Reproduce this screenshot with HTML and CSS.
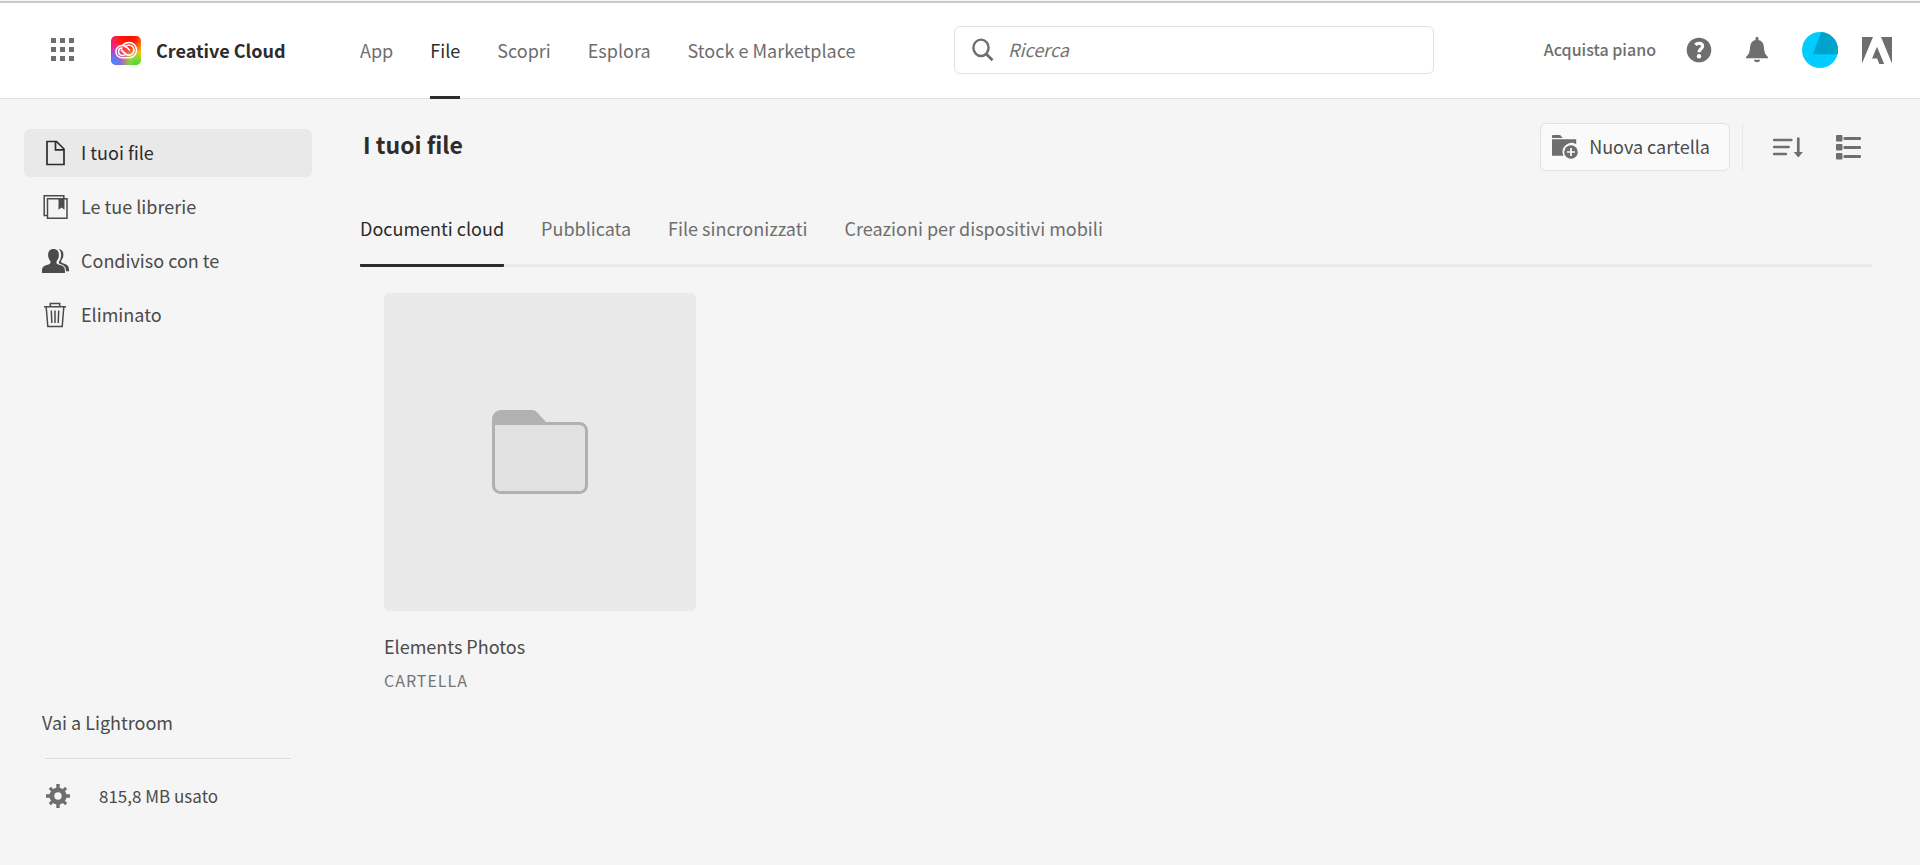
FILE: index.html
```html
<!DOCTYPE html>
<html lang="it">
<head>
<meta charset="utf-8">
<meta name="viewport" content="width=device-width, initial-scale=1">
<title>Creative Cloud</title>
<link rel="stylesheet" href="styles.css">
</head>
<body>
<header class="topbar">
  <div class="brand">
    <button class="icon-button" aria-label="Menu app">
      <svg width="24" height="24" viewBox="0 0 24 24" fill="currentColor"><path d="M0 0h5v5H0zM9 0h5v5H9zM18 0h5v5h-5zM0 9h5v5H0zM9 9h5v5H9zM18 9h5v5h-5zM0 18h5v5H0zM9 18h5v5H9zM18 18h5v5h-5z"/></svg>
    </button>
    <a class="brand-link" href="#">
      <svg width="30" height="29" viewBox="0 0 30 29">
        <defs>
          <radialGradient id="g-red" cx=".55" cy="0" r=".7"><stop offset="0" stop-color="#ff0800"/><stop offset=".4" stop-color="#ff1a10"/><stop offset="1" stop-color="#ff3000" stop-opacity="0"/></radialGradient>
          <radialGradient id="g-blue" cx="0" cy="1" r=".65"><stop offset="0" stop-color="#2f8dff"/><stop offset=".35" stop-color="#5b7df5"/><stop offset="1" stop-color="#8a5cf0" stop-opacity="0"/></radialGradient>
          <radialGradient id="g-green" cx=".85" cy="1.05" r=".6"><stop offset="0" stop-color="#3fd32c"/><stop offset=".45" stop-color="#7ddc3c"/><stop offset="1" stop-color="#c8e020" stop-opacity="0"/></radialGradient>
          <linearGradient id="g-base" x1="0" y1=".4" x2="1" y2=".6"><stop offset="0" stop-color="#f012c8"/><stop offset=".5" stop-color="#ff5a6a"/><stop offset="1" stop-color="#ffc400"/></linearGradient>
        </defs>
        <rect width="30" height="29" rx="5" fill="url(#g-base)"/>
        <rect width="30" height="29" rx="5" fill="url(#g-red)"/>
        <rect width="30" height="29" rx="5" fill="url(#g-green)"/>
        <rect width="30" height="29" rx="5" fill="url(#g-blue)"/>
        <g fill="none" stroke="#fff" stroke-width="1.500" stroke-linecap="round">
          <path d="M11.700 9.500c1.400-1.800 3.600-3 6.200-3 4.300 0 7.700 3.400 7.700 7.600s-3.300 7.700-7.600 7.700H11.200c-3.600 0-6.300-2.600-6.300-6.100s2.800-6.200 6.300-6.200c1.900 0 3.400.7 4.700 2l2.500 2.400" />
          <path d="M14.200 10.600c1-1 2.200-1.500 3.700-1.500 2.800 0 5 2.200 5 5s-2.200 5.100-5 5.100c-1.500 0-2.700-.5-3.800-1.600l-3.600-3.400" stroke-width="1.800"/>
          <path d="M13.500 19.100c-3.300 1.100-6-.8-6-3.500 0-2.100 1.600-3.700 3.700-3.700"/>
        </g>
      </svg>
      <span>Creative Cloud</span>
    </a>
  </div>
  <nav class="main-nav" aria-label="Principale">
    <a href="#">App</a>
    <a href="#" class="active" aria-current="page">File</a>
    <a href="#">Scopri</a>
    <a href="#">Esplora</a>
    <a href="#">Stock e Marketplace</a>
  </nav>
  <label class="search">
    <svg width="22" height="24" viewBox="0 0 22 24" fill="none" stroke="currentColor" stroke-width="2.400"><ellipse cx="9" cy="9.800" rx="7.600" ry="8.200"/><path d="M14 15.700l6.500 6.600" stroke-width="2.800"/></svg>
    <input type="search" placeholder="Ricerca" aria-label="Ricerca">
  </label>
  <div class="account">
    <a class="buy" href="#">Acquista piano</a>
    <button class="icon-button" aria-label="Aiuto">
      <svg width="26" height="26" viewBox="0 0 26 26"><circle cx="13" cy="13" r="12.300" fill="currentColor"/><path d="M9.300 7.700c1.100-1 2.300-1.400 3.700-1.400 2.200 0 3.600 1.100 3.600 2.900 0 2.700-3.600 3-3.600 6" fill="none" stroke="#fff" stroke-width="3.200"/><circle cx="13" cy="19.200" r="2.200" fill="#fff"/></svg>
    </button>
    <button class="icon-button" aria-label="Notifiche">
      <svg width="24" height="26" viewBox="0 0 24 26" fill="currentColor"><path d="M10.500 3V1.200C10.500.4 11.200 0 12 0s1.500.4 1.500 1.200V3c3.300.6 5 3 5.300 6.300.5 6 1.200 8.200 4.200 10.700v1.200H1V20c3-2.500 3.700-4.700 4.200-10.700C5.500 6 7.200 3.600 10.500 3zM8.800 22.700h6.400c-.3 1.400-1.500 2.500-3.200 2.500s-2.900-1.100-3.200-2.500z"/></svg>
    </button>
    <button class="icon-button" aria-label="Profilo">
      <svg width="36" height="36" viewBox="0 0 36 36"><circle cx="18" cy="18" r="18" fill="#00ccff"/><path d="M19.300 0A18 18 0 0 1 35.500 22.200H10.800z" fill="#00a3cc"/></svg>
    </button>
    <a class="icon-button" href="#" aria-label="Adobe">
      <svg width="30" height="27" viewBox="0 0 30 27" fill="currentColor"><path d="M0 0h11L0 26.500zM19 0h11v26.500zM15 9.800l7.200 17.200h-4.900l-2.100-5.400H10z"/></svg>
    </a>
  </div>
</header>
<div class="layout">
  <aside class="sidebar">
    <nav class="side-nav" aria-label="File">
      <a href="#" class="active" aria-current="page">
        <svg width="28" height="26" viewBox="0 0 28 26" fill="none" stroke="currentColor" stroke-width="1.700"><path d="M5 1.500h9.500l7.500 7.500v15.500H5zM13.500 1.500v8.300H22"/></svg>
        <span>I tuoi file</span>
      </a>
      <a href="#">
        <svg width="28" height="26" viewBox="0 0 28 26" fill="none" stroke="currentColor" stroke-width="1.500"><path d="M5.500 21.500H2.200V1.800h19.600v3M5.500 4.800h19.500v19.500H5.500z"/><path d="M16.500 5h6v10.800l-3-2.300-3 2.300z" fill="currentColor" stroke="none"/></svg>
        <span>Le tue librerie</span>
      </a>
      <a href="#">
        <svg width="28" height="26" viewBox="0 0 28 26" fill="currentColor"><path d="M11.500 1c3.500 0 5.400 2.300 5.400 5.800 0 2.600-.7 4.300-2 5.900-.9 1.200-.6 2.900.8 3.500l4 1.400c2 .8 3 2.200 3.200 4.300l.1 3.100H0v-3.100c.2-2.100 1.200-3.500 3.200-4.300l4-1.400c1.400-.6 1.800-2.300.9-3.500-1.300-1.600-2-3.300-2-5.900C6.100 3.300 8 1 11.500 1z"/><path d="M16.800 1.100c3 .2 4.600 2.300 4.600 5.500 0 2.500-.6 4-1.800 5.500-.8 1.100-.5 2.500.8 3l3.200 1.200c2.200.8 3.100 2.300 3.300 4.300l.2 2.600h-3c-.1-3.600-1.400-5.700-4.500-6.800l-2-.7c-1-.4-1-1.500-.3-2.400 1.100-1.700 1.800-3.700 1.800-6.300 0-2.500-.8-4.600-2.300-5.900z"/></svg>
        <span>Condiviso con te</span>
      </a>
      <a href="#">
        <svg width="28" height="26" viewBox="0 0 28 26" fill="none" stroke="currentColor" stroke-width="1.500"><path d="M2 4.800h22M8.300 4.500V1.500h9.400v3M4.200 5l1.600 19.500h14.400L21.800 5M9.300 8.500l.5 12.500M13 8.500V21M16.700 8.500L16.200 21"/></svg>
        <span>Eliminato</span>
      </a>
    </nav>
    <div class="side-foot">
      <a class="lightroom" href="#">Vai a Lightroom</a>
      <a class="storage" href="#">
        <svg width="26" height="26" viewBox="0 0 26 26"><g fill="currentColor"><circle cx="13" cy="13" r="8.600"/><path d="M11.300 1h3.400v24h-3.400zM1 11.300h24v3.400H1z"/><path d="M11.500 1.500h3v23h-3zM1.500 11.500h23v3h-23z" transform="rotate(45 13 13)"/></g><circle cx="13" cy="13" r="3.700" fill="#f5f5f5"/></svg>
        <span>815,8 MB usato</span>
      </a>
    </div>
  </aside>
  <main class="content">
    <div class="heading">
      <h1>I tuoi file</h1>
      <div class="tools">
        <button class="new-folder">
          <svg width="28" height="26" viewBox="0 0 28 26"><path d="M1 2.200C1 1.500 1.500 1 2.200 1h6.300c1.200 0 2 1.600 3.200 3H1zM1 5.200h24.200v5a9 9 0 0 0-12.700 11.600H1z" fill="currentColor"/><circle cx="20" cy="18" r="6.800" fill="currentColor"/><path d="M20 14v8M16 18h8" stroke="#fafafa" stroke-width="1.700"/></svg>
          <span>Nuova cartella</span>
        </button>
        <div class="views">
          <button class="icon-button" aria-label="Ordina">
            <svg width="30" height="24" viewBox="0 0 30 24" fill="none" stroke="currentColor" stroke-width="2.700"><path d="M1.300 5h17M1.300 12h14.300M1.300 19h11.500M25.300 3.500v15" stroke-linecap="round"/><path d="M20.700 17h9.200l-4.600 5.500z" fill="currentColor" stroke="none"/></svg>
          </button>
          <button class="icon-button" aria-label="Vista elenco">
            <svg width="26" height="26" viewBox="0 0 26 26" fill="currentColor"><rect x="0" y="1" width="6.500" height="6.500" rx="1"/><rect x="0" y="10" width="6.500" height="6.500" rx="1"/><rect x="0" y="19" width="6.500" height="6.500" rx="1"/><rect x="7.500" y="3" width="17.500" height="3" rx="1"/><rect x="7.500" y="12" width="17.500" height="3" rx="1"/><rect x="7.500" y="21" width="17.500" height="3" rx="1"/></svg>
          </button>
        </div>
      </div>
    </div>
    <nav class="tabs" aria-label="Categorie">
      <a href="#" class="active" aria-current="page">Documenti cloud</a>
      <a href="#">Pubblicata</a>
      <a href="#">File sincronizzati</a>
      <a href="#">Creazioni per dispositivi mobili</a>
    </nav>
    <div class="cards">
      <a class="card" href="#">
        <div class="thumb">
          <svg width="96" height="84" viewBox="0 0 96 84"><path d="M1.500 13.500h86a7 7 0 0 1 7 7v55a7 7 0 0 1-7 7h-79a7 7 0 0 1-7-7z" fill="#e1e1e1" stroke="#b1b1b1" stroke-width="3"/><path d="M0 15V9a9 9 0 0 1 9-9h31c2 0 3.500.7 5 2.200L54 12v3z" fill="#b1b1b1"/></svg>
        </div>
        <div class="card-name">Elements Photos</div>
        <div class="card-kind">CARTELLA</div>
      </a>
    </div>
  </main>
</div>
</body>
</html>
```

FILE: styles.css
```css
* {
  box-sizing: border-box;
}

body {
  margin: 0;
  min-height: 100vh;
  display: flex;
  flex-direction: column;
  padding-top: 1px;
  background: #f5f5f5;
  color: #4b4b4b;
  font-family: "Noto Sans CJK SC", "Open Sans", sans-serif;
  font-size: 18px;
  line-height: 24px;
}

a {
  color: inherit;
  text-decoration: none;
}

button,
input {
  font: inherit;
  color: inherit;
}

svg {
  display: block;
  flex: none;
}

.icon-button {
  padding: 0;
  border: 0;
  background: none;
  color: #6e6e6e;
}

.topbar {
  display: grid;
  grid-template-columns: 360px minmax(500px, 594px) minmax(200px, 480px) 1fr;
  align-items: center;
  height: 98px;
  padding-bottom: 1px;
  border-top: 2px solid #cacaca;
  border-bottom: 1px solid #e1e1e1;
  background: #fff;
}

.brand {
  display: flex;
  align-items: center;
  gap: 36px;
  padding-left: 51px;
}

.brand-link {
  display: flex;
  align-items: center;
  gap: 15px;
  color: #2c2c2c;
  font-weight: 700;
  white-space: nowrap;
}

.main-nav {
  display: flex;
  align-self: stretch;
  gap: 37px;
  margin-bottom: -2px;
  color: #6e6e6e;
  white-space: nowrap;
}

.main-nav a {
  display: flex;
  align-items: center;
  border-bottom: 3px solid transparent;
}

.main-nav .active {
  color: #2c2c2c;
  border-color: #2c2c2c;
}

.search {
  display: flex;
  align-items: center;
  gap: 14px;
  height: 48px;
  padding: 0 17px;
  border: 1px solid #e1e1e1;
  border-radius: 6px;
  color: #6e6e6e;
}

.search input {
  flex: 1;
  min-width: 0;
  padding: 0 0 3px;
  border: 0;
  outline: 0;
  background: none;
}

.search input::placeholder {
  color: #747474;
  font-style: italic;
  opacity: 1;
}

.account {
  display: flex;
  align-items: center;
  justify-content: flex-end;
  padding-right: 28px;
  color: #6e6e6e;
}

.buy {
  margin-right: 30px;
  padding-bottom: 2px;
  font-size: 16px;
  font-weight: 500;
  white-space: nowrap;
}

.account .icon-button + .icon-button {
  margin-left: 33px;
}

.account .icon-button:last-child {
  margin-left: 24px;
}

.layout {
  flex: 1;
  display: grid;
  grid-template-columns: 312px 1fr;
}

.sidebar {
  display: flex;
  flex-direction: column;
  justify-content: space-between;
  padding: 30px 0 56px 24px;
}

.side-nav {
  display: flex;
  flex-direction: column;
  gap: 6px;
}

.side-nav a {
  display: flex;
  align-items: center;
  gap: 11px;
  height: 48px;
  padding-left: 18px;
  border-radius: 6px;
}

.side-nav span,
.new-folder span {
  padding-bottom: 2px;
}

.side-nav .active {
  background: #e9e9e9;
  color: #2c2c2c;
}

.side-foot {
  padding: 0 21px 0 18px;
}

.lightroom {
  display: block;
  padding-bottom: 24px;
}

.storage {
  display: flex;
  align-items: center;
  gap: 28px;
  margin-left: 3px;
  padding-top: 24px;
  border-top: 1px solid #dcdcdc;
  font-size: 17px;
}

.storage svg {
  color: #6e6e6e;
}

.content {
  padding: 24px 48px 0;
}

.heading {
  display: flex;
  align-items: flex-start;
  justify-content: space-between;
}

h1 {
  margin: 9px 0 0 3px;
  color: #2c2c2c;
  font-size: 23px;
  line-height: 24px;
  font-weight: 700;
}

.tools {
  display: flex;
  align-items: center;
  gap: 12px;
}

.new-folder {
  display: flex;
  align-items: center;
  gap: 10px;
  height: 48px;
  padding: 0 19px 0 10px;
  border: 1px solid #e1e1e1;
  border-radius: 6px;
  background: #fafafa;
  white-space: nowrap;
}

.new-folder svg {
  color: #6e6e6e;
}

.views {
  display: flex;
  align-items: center;
  gap: 33px;
  height: 48px;
  padding: 0 10px 0 30px;
  border-left: 1px solid #e9e9e9;
}

.tabs {
  display: flex;
  gap: 37px;
  margin-top: 45px;
  border-bottom: 3px solid #e9e9e9;
  color: #6e6e6e;
}

.tabs a {
  margin-bottom: -3px;
  padding-bottom: 24px;
  border-bottom: 3px solid transparent;
}

.tabs .active {
  color: #2c2c2c;
  border-color: #2c2c2c;
  border-radius: 1px;
}

.cards {
  display: grid;
  grid-template-columns: repeat(auto-fill, 312px);
  gap: 24px;
  padding: 26px 24px;
}

.thumb {
  display: flex;
  align-items: center;
  justify-content: center;
  aspect-ratio: 312 / 318;
  border-radius: 6px;
  background: #e9e9e9;
}

.card-name {
  margin-top: 23px;
}

.card-kind {
  margin-top: 10px;
  color: #747474;
  font-size: 16px;
  letter-spacing: 1px;
}
```
